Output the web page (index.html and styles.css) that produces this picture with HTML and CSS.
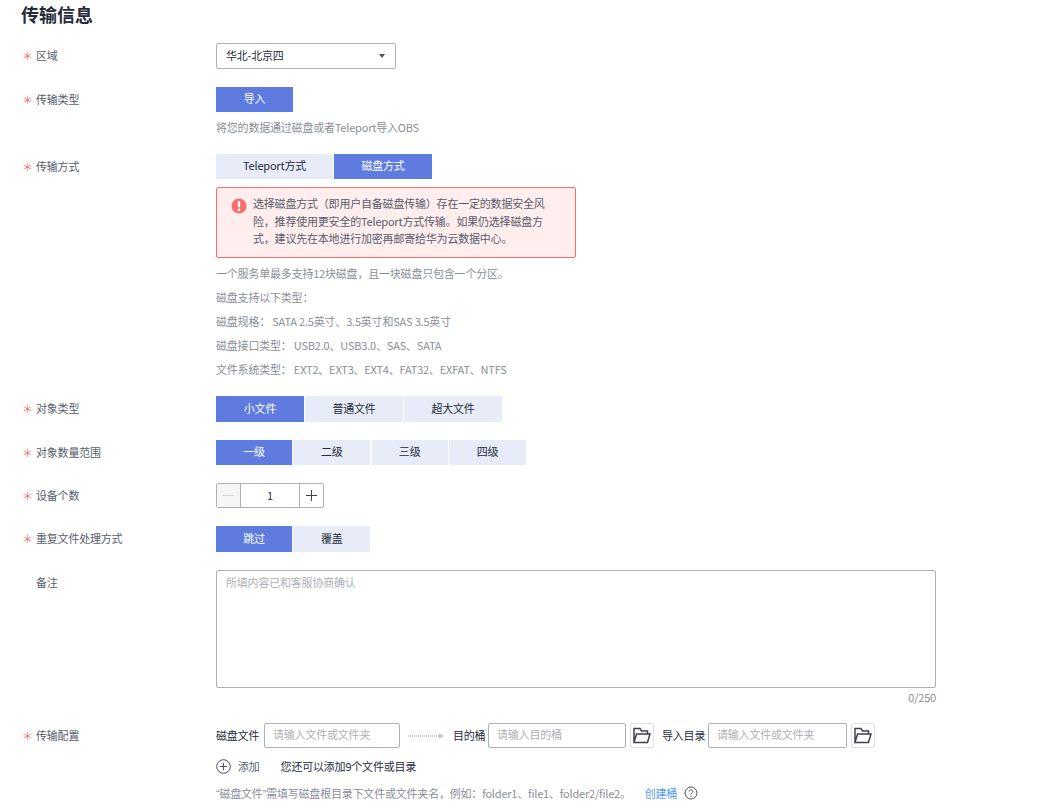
FILE: index.html
```html
<!DOCTYPE html>
<html lang="zh-CN">
<head>
    <meta charset="UTF-8">
    <meta name="viewport" content="width=device-width, initial-scale=1.0">
    <title>传输信息</title>
    <link rel="stylesheet" href="styles.css">
</head>
<body>

    <div class="container">
        <h1>传输信息</h1>

        <div class="row row-region">
            <div class="label"><span class="star">＊</span>区域</div>
            <div class="field">
                <div class="select">
                    <span>华北-北京四</span>
                    <span class="caret"></span>
                </div>
            </div>
        </div>

        <div class="row row-type">
            <div class="label"><span class="star">＊</span>传输类型</div>
            <div class="field">
                <div class="tabs">
                    <div class="tab active w77">导入</div>
                </div>
                <p class="hint hint-type">将您的数据通过磁盘或者Teleport导入OBS</p>
            </div>
        </div>

        <div class="row row-method">
            <div class="label"><span class="star">＊</span>传输方式</div>
            <div class="field">
                <div class="tabs">
                    <div class="tab w117">Teleport方式</div>
                    <div class="tab active w98">磁盘方式</div>
                </div>
                <div class="alert">
                    <svg class="alert-icon" width="16" height="16" viewBox="0 0 16 16">
                        <circle cx="8" cy="8" r="7.5" fill="#f66f6a"/>
                        <rect x="6.8" y="3" width="2.4" height="6.6" rx="1.1" fill="#fff"/>
                        <circle cx="8" cy="11.9" r="1.3" fill="#fff"/>
                    </svg>
                    <div>选择磁盘方式（即用户自备磁盘传输）存在一定的数据安全风险，推荐使用更安全的Teleport方式传输。如果仍选择磁盘方式，建议先在本地进行加密再邮寄给华为云数据中心。</div>
                </div>
                <div class="notes">
                    <p>一个服务单最多支持12块磁盘，且一块磁盘只包含一个分区。</p>
                    <p>磁盘支持以下类型：</p>
                    <p>磁盘规格： SATA 2.5英寸、3.5英寸和SAS 3.5英寸</p>
                    <p>磁盘接口类型： USB2.0、USB3.0、SAS、SATA</p>
                    <p>文件系统类型： EXT2、EXT3、EXT4、FAT32、EXFAT、NTFS</p>
                </div>
            </div>
        </div>

        <div class="row row-object">
            <div class="label"><span class="star">＊</span>对象类型</div>
            <div class="field">
                <div class="tabs">
                    <div class="tab active w88">小文件</div>
                    <div class="tab w98">普通文件</div>
                    <div class="tab w98">超大文件</div>
                </div>
            </div>
        </div>

        <div class="row row-range">
            <div class="label"><span class="star">＊</span>对象数量范围</div>
            <div class="field">
                <div class="tabs">
                    <div class="tab active w76">一级</div>
                    <div class="tab w77">二级</div>
                    <div class="tab w76">三级</div>
                    <div class="tab w77">四级</div>
                </div>
            </div>
        </div>

        <div class="row row-count">
            <div class="label"><span class="star">＊</span>设备个数</div>
            <div class="field">
                <div class="stepper">
                    <div class="step step-off">
                        <svg width="11" height="11" viewBox="0 0 11 11"><path d="M0 5.5h11" stroke="#d6d7de" stroke-width="1"/></svg>
                    </div>
                    <div class="step-value">1</div>
                    <div class="step">
                        <svg width="11" height="11" viewBox="0 0 11 11"><path d="M0 5.5h11M5.5 0v11" stroke="#3f4252" stroke-width="1"/></svg>
                    </div>
                </div>
            </div>
        </div>

        <div class="row row-repeat">
            <div class="label"><span class="star">＊</span>重复文件处理方式</div>
            <div class="field">
                <div class="tabs">
                    <div class="tab active w76">跳过</div>
                    <div class="tab w77">覆盖</div>
                </div>
            </div>
        </div>

        <div class="row row-remark">
            <div class="label label-plain">备注</div>
            <div class="field">
                <div class="textarea">所填内容已和客服协商确认</div>
                <div class="counter">0/250</div>
            </div>
        </div>

        <div class="row row-config">
            <div class="label"><span class="star">＊</span>传输配置</div>
            <div class="field">
                <div class="config">
                    <span class="config-name">磁盘文件</span>
                    <div class="input w136">请输入文件或文件夹</div>
                    <svg class="arrow" width="37" height="8" viewBox="0 0 37 8">
                        <path d="M0 4h31" stroke="#c8c9d0" stroke-width="2" stroke-dasharray="1 1"/>
                        <path d="M31 1l5 3-5 3z" fill="#c8c9d0"/>
                    </svg>
                    <span class="config-name name-bucket">目的桶</span>
                    <div class="input w138">请输入目的桶</div>
                    <div class="folder">
                        <svg width="18" height="17" viewBox="0 0 18 17"><path d="M1 15.5V1.5h6l1.5 2.5h6v3M1 15.5h13.5L17 7H3.5L1 15.5z" fill="none" stroke="#3f4252" stroke-width="1.5"/></svg>
                    </div>
                    <span class="config-name name-dir">导入目录</span>
                    <div class="input w139">请输入文件或文件夹</div>
                    <div class="folder">
                        <svg width="18" height="17" viewBox="0 0 18 17"><path d="M1 15.5V1.5h6l1.5 2.5h6v3M1 15.5h13.5L17 7H3.5L1 15.5z" fill="none" stroke="#3f4252" stroke-width="1.5"/></svg>
                    </div>
                </div>
                <div class="add-line">
                    <svg width="15" height="15" viewBox="0 0 15 15">
                        <circle cx="7.5" cy="7.5" r="6.8" fill="none" stroke="#4f5261" stroke-width="1"/>
                        <path d="M3.8 7.5h7.4M7.5 3.8v7.4" stroke="#4f5261" stroke-width="1"/>
                    </svg>
                    <span class="add-text">添加</span>
                    <span>您还可以添加9个文件或目录</span>
                </div>
                <div class="foot-line">
                    <span><span class="quote">“</span>磁盘文件<span class="quote">”</span>需填写磁盘根目录下文件或文件夹名，例如：folder1、file1、folder2/file2。</span>
                    <span class="link">创建桶</span>
                    <svg width="14" height="14" viewBox="0 0 14 14">
                        <circle cx="7" cy="7" r="6" fill="none" stroke="#4f5261" stroke-width="1"/>
                        <path d="M5.2 5.5c0-1 .8-1.7 1.8-1.7s1.8.7 1.8 1.6c0 1.4-1.8 1.4-1.8 2.9" fill="none" stroke="#4f5261" stroke-width="1"/>
                        <circle cx="7" cy="10.2" r=".7" fill="#4f5261"/>
                    </svg>
                </div>
            </div>
        </div>
    </div>

</body>
</html>
```

FILE: styles.css
```css
body {
    font-family: "Noto Sans CJK SC", "Liberation Sans", sans-serif;
    font-size: 11px;
    letter-spacing: -0.2px;
    color: #252b3a;
    background-color: #fff;
    margin: 0;
}

p {
    margin: 0;
}

.container {
    padding: 0 0 0 21px;
    height: 811px;
    overflow: hidden;
    box-sizing: border-box;
}

h1 {
    font-size: 18px;
    line-height: 24px;
    letter-spacing: 0;
    font-weight: bold;
    color: #252b3a;
    margin: 0;
    padding-top: 2px;
}

.row {
    display: flex;
}

.row-region { margin-top: 17px; }
.row-type { margin-top: 18px; }
.row-method { margin-top: 18px; }
.row-object { margin-top: 15px; }
.row-range { margin-top: 18px; }
.row-count { margin-top: 18px; }
.row-repeat { margin-top: 18px; }
.row-remark { margin-top: 18px; }
.row-config { margin-top: 17px; }

.label {
    width: 195px;
    flex-shrink: 0;
    line-height: 25px;
    color: #575d6c;
    white-space: nowrap;
}

.label-plain {
    padding-left: 15px;
    width: 180px;
    line-height: 24px;
}

.star {
    display: inline-block;
    width: 14px;
    padding-left: 1px;
    color: #f66f6a;
    font-size: 11px;
}

.field {
    width: 720px;
}

.select {
    width: 180px;
    height: 26px;
    box-sizing: border-box;
    border: 1px solid #adb0b8;
    border-radius: 2px;
    padding: 0 10px 2px 9px;
    display: flex;
    justify-content: space-between;
    align-items: center;
}

.caret {
    width: 0;
    height: 0;
    margin-top: 2px;
    border-left: 3.5px solid transparent;
    border-right: 3.5px solid transparent;
    border-top: 4px solid #4f5261;
}

.tabs {
    display: flex;
    gap: 1px;
}

.tab {
    height: 25px;
    line-height: 23px;
    text-align: center;
    background-color: #e8ecf8;
    color: #252b3a;
}

.tab.active {
    background-color: #5e7ce0;
    color: #fff;
}

.row-object .tab,
.row-repeat .tab {
    height: 26px;
    line-height: 24px;
}

.w76 { width: 76px; }
.w77 { width: 77px; }
.w88 { width: 88px; }
.w98 { width: 98px; }
.w117 { width: 117px; }

.row-range .tabs,
.row-repeat .tabs {
    gap: 1.33px;
}

.hint {
    color: #8a8e99;
    line-height: 16px;
}

.hint-type {
    margin-top: 7px;
    margin-bottom: 1px;
}

.alert {
    width: 360px;
    height: 71px;
    box-sizing: border-box;
    margin-top: 8px;
    padding: 7px 20px 0 14px;
    background-color: #ffeeed;
    border: 1px solid #f66f6a;
    border-radius: 2px;
    display: flex;
    gap: 6px;
    line-height: 17.5px;
    color: #575d6c;
}

.alert-icon {
    flex-shrink: 0;
    margin-top: 3px;
}

.notes {
    margin-top: 3px;
    color: #8a8e99;
    line-height: 24px;
}

.stepper {
    width: 108px;
    height: 25px;
    box-sizing: border-box;
    border: 1px solid #adb0b8;
    border-radius: 2px;
    display: flex;
}

.step {
    width: 23px;
    display: flex;
    align-items: center;
    justify-content: center;
}

.step-off {
    background-color: #f5f5f6;
}

.step-value {
    flex: 1;
    text-align: center;
    line-height: 22px;
    border-left: 1px solid #adb0b8;
    border-right: 1px solid #adb0b8;
    color: #252b3a;
}

.textarea {
    height: 118px;
    box-sizing: border-box;
    border: 1px solid #adb0b8;
    border-radius: 2px;
    padding: 3px 9px;
    line-height: 16px;
    color: #adb0b8;
}

.counter {
    text-align: right;
    color: #8a8e99;
    line-height: 18px;
}

.config {
    display: flex;
    align-items: center;
}

.config-name {
    color: #252b3a;
    white-space: nowrap;
    margin-bottom: 2px;
}

.name-bucket {
    width: 35px;
    margin-left: 8px;
}

.name-dir {
    margin-left: 8px;
    width: 46px;
}

.input {
    height: 25px;
    line-height: 21px;
    box-sizing: border-box;
    border: 1px solid #adb0b8;
    border-radius: 2px;
    padding: 0 8px;
    color: #adb0b8;
    white-space: nowrap;
}

.w136 { width: 136px; margin-left: 0; }
.w138 { width: 138px; }
.w139 { width: 139px; }

.config > .config-name:first-child {
    width: 48px;
}

.arrow {
    margin-left: 8px;
}

.folder {
    width: 24px;
    height: 25px;
    box-sizing: border-box;
    margin-left: 4px;
    border: 1px solid #dfe1e6;
    border-radius: 2px;
    display: flex;
    align-items: center;
    justify-content: center;
}

.add-line {
    display: flex;
    align-items: center;
    margin-top: 10px;
    height: 16px;
}

.add-text {
    margin: 0 21px 0 7px;
    color: #575d6c;
}

.foot-line {
    display: flex;
    align-items: center;
    margin-top: 11px;
    height: 16px;
    color: #8a8e99;
}

.quote {
    font-family: "Liberation Sans", sans-serif;
}

.link {
    color: #4f9cf5;
    margin: 0 7px 0 14px;
}
```
